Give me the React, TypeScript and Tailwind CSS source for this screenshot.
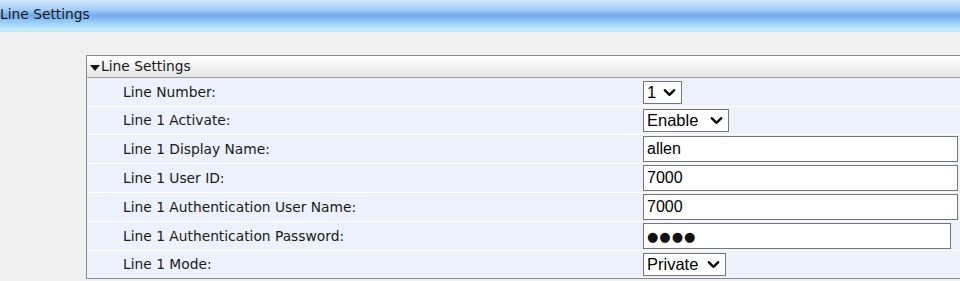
import { ChevronDown } from "lucide-react"

type Row = {
  label: string
  kind: "select" | "input" | "password"
  value: string
  width: string
}

const rows: Row[] = [
  { label: "Line Number:", kind: "select", value: "1", width: "w-[39px]" },
  { label: "Line 1 Activate:", kind: "select", value: "Enable", width: "w-[86px]" },
  { label: "Line 1 Display Name:", kind: "input", value: "allen", width: "w-[315px]" },
  { label: "Line 1 User ID:", kind: "input", value: "7000", width: "w-[315px]" },
  { label: "Line 1 Authentication User Name:", kind: "input", value: "7000", width: "w-[315px]" },
  { label: "Line 1 Authentication Password:", kind: "password", value: "●●●●", width: "w-[308px]" },
  { label: "Line 1 Mode:", kind: "select", value: "Private", width: "w-[83px]" },
]

function Control({ row }: { row: Row }) {
  if (row.kind === "select") {
    return (
      <div className={`relative h-[23px] ${row.width} border border-[#767676] bg-white`}>
        <select
          defaultValue={row.value}
          className="h-full w-full appearance-none pl-[3px] font-['Liberation_Sans',Arial,sans-serif] text-[16.5px] leading-[21px] text-black outline-none"
        >
          <option value={row.value}>{row.value}</option>
        </select>
        <ChevronDown
          className="pointer-events-none absolute right-[2px] top-[1px] text-black"
          size={19}
          strokeWidth={2.8}
        />
      </div>
    )
  }
  if (row.kind === "password") {
    return (
      <input
        type="text"
        readOnly
        defaultValue={row.value}
        className={`h-[26px] ${row.width} border border-[#767676] bg-white px-[3px] font-['DejaVu_Sans',sans-serif] text-[13px] tracking-[1px] text-[#111] outline-none`}
      />
    )
  }
  return (
    <input
      type="text"
      defaultValue={row.value}
      className={`h-[26px] ${row.width} border border-[#767676] bg-white px-[3px] font-['Liberation_Sans',Arial,sans-serif] text-[16px] text-black outline-none`}
    />
  )
}

export default function App() {
  return (
    <div className="h-[281px] w-[960px] overflow-hidden bg-[#f0f0f0] font-['DejaVu_Sans',Verdana,sans-serif] text-[13.8px] text-[#1a1a1a]">
      <div className="flex h-[32px] items-center border-b border-[#cfe3ef] bg-[linear-gradient(to_bottom,#cfe6fd_0%,#a6d0fa_30%,#72aaeb_50%,#9ed2f8_75%,#c9f1fd_100%)] pb-[2px]">
        Line Settings
      </div>
      <div className="pl-[86px] pt-[23px]">
        <div className="w-[900px] border border-[#8a8a8a] border-r-0">
          <div className="flex h-[22px] items-center border-b border-[#9a9a9a] bg-[linear-gradient(to_bottom,#ffffff,#e4e4e4)] pl-[3px]">
            <span className="mr-[1px] mt-[2px] h-0 w-0 border-x-[5px] border-t-[6px] border-x-transparent border-t-[#111]" />
            Line Settings
          </div>
          {rows.map((row, i) => (
            <div
              key={row.label}
              className={`flex items-center bg-[#ecf1fb] ${i > 0 ? "border-t border-white" : ""} ${row.kind === "select" ? "h-[28px]" : "h-[29px]"}`}
            >
              <div className="w-[556px] pl-[36px]">{row.label}</div>
              <Control row={row} />
            </div>
          ))}
        </div>
      </div>
    </div>
  )
}
